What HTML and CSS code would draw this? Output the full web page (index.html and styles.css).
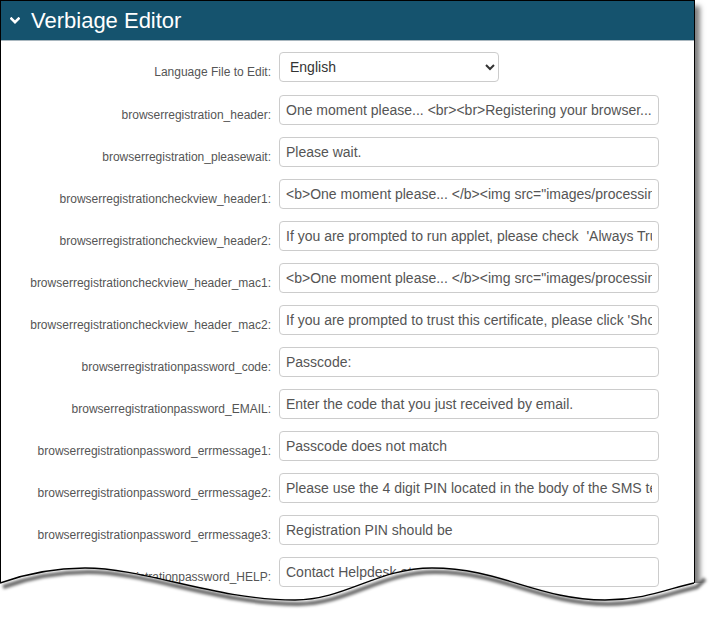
FILE: index.html
```html
<!DOCTYPE html>
<html lang="en">
<head>
<meta charset="utf-8">
<title>Verbiage Editor</title>
<link rel="stylesheet" href="styles.css">
</head>
<body>
<div class="page">
  <section class="panel">
    <header class="panel-head">
      <svg class="chev" width="10" height="8" viewBox="0 0 10 8"><polyline points="1.4,1.6 5,5.2 8.6,1.6" fill="none" stroke="#fff" stroke-width="2.6" stroke-linecap="square"/></svg>
      <h1 class="panel-title">Verbiage Editor</h1>
    </header>
    <form class="form">
      <label class="lbl">Language File to Edit:</label>
      <div class="ctl first"><select class="sel"><option>English</option></select></div>

      <label class="lbl">browserregistration_header:</label>
      <div class="ctl"><input class="inp" type="text" value="One moment please... &lt;br&gt;&lt;br&gt;Registering your browser..."></div>

      <label class="lbl">browserregistration_pleasewait:</label>
      <div class="ctl"><input class="inp" type="text" value="Please wait."></div>

      <label class="lbl">browserregistrationcheckview_header1:</label>
      <div class="ctl"><input class="inp" type="text" value="&lt;b&gt;One moment please... &lt;/b&gt;&lt;img src=&quot;images/processing.gif&quot;&gt;"></div>

      <label class="lbl">browserregistrationcheckview_header2:</label>
      <div class="ctl"><input class="inp" type="text" value="If you are prompted to run applet, please check  'Always Trust...'"></div>

      <label class="lbl">browserregistrationcheckview_header_mac1:</label>
      <div class="ctl"><input class="inp" type="text" value="&lt;b&gt;One moment please... &lt;/b&gt;&lt;img src=&quot;images/processing.gif&quot;&gt;"></div>

      <label class="lbl">browserregistrationcheckview_header_mac2:</label>
      <div class="ctl"><input class="inp" type="text" value="If you are prompted to trust this certificate, please click 'Show...'"></div>

      <label class="lbl">browserregistrationpassword_code:</label>
      <div class="ctl"><input class="inp" type="text" value="Passcode:"></div>

      <label class="lbl">browserregistrationpassword_EMAIL:</label>
      <div class="ctl"><input class="inp" type="text" value="Enter the code that you just received by email."></div>

      <label class="lbl">browserregistrationpassword_errmessage1:</label>
      <div class="ctl"><input class="inp" type="text" value="Passcode does not match"></div>

      <label class="lbl">browserregistrationpassword_errmessage2:</label>
      <div class="ctl"><input class="inp" type="text" value="Please use the 4 digit PIN located in the body of the SMS text message."></div>

      <label class="lbl">browserregistrationpassword_errmessage3:</label>
      <div class="ctl"><input class="inp" type="text" value="Registration PIN should be"></div>

      <label class="lbl">browserregistrationpassword_HELP:</label>
      <div class="ctl"><input class="inp" type="text" value="Contact Helpdesk at"></div>
    </form>
  </section>
  <svg class="tear" width="712" height="62" viewBox="0 0 712 62">
    <defs>
      <filter id="blur" x="-5%" y="-50%" width="110%" height="200%"><feGaussianBlur stdDeviation="1.8"/></filter>
    </defs>
    <path d="M-2,28 L0,28 C28,18 55,13 85,13 C145,13 215,45 295,45 C345,45 378,13 432,13 C500,13 538,45 605,45 C645,45 670,33 694,28 L712,28 L712,62 L-2,62 Z" fill="#fff"/>
    <path transform="translate(3,4)" d="M0,28 C28,18 55,13 85,13 C145,13 215,45 295,45 C345,45 378,13 432,13 C500,13 538,45 605,45 C645,45 670,33 694,28 L702,20" fill="none" stroke="rgba(0,0,0,0.6)" stroke-width="4" filter="url(#blur)"/>
    <path d="M0,28 C28,18 55,13 85,13 C145,13 215,45 295,45 C345,45 378,13 432,13 C500,13 538,45 605,45 C645,45 670,33 694,28" fill="none" stroke="#000" stroke-width="1.4"/>
  </svg>
</div>
</body>
</html>
```
FILE: styles.css
```css
html, body {
  margin: 0;
  padding: 0;
  background: #fff;
  overflow: hidden;
}
body {
  font-family: "Liberation Sans", Arial, sans-serif;
}
.page {
  position: relative;
  width: 710px;
  height: 617px;
}
.panel {
  width: 693px;
  height: 616px;
  border: 1px solid #000;
  border-bottom: none;
  background: #fff;
  box-shadow: 5px 6px 5px rgba(0, 0, 0, 0.5);
  overflow: hidden;
}
.panel-head {
  height: 39px;
  background: #15536e;
  border-bottom: 1px solid #a9b7bf;
  display: flex;
  align-items: center;
  padding-left: 9px;
  box-sizing: content-box;
}
.chev {
  display: block;
  margin-top: 1px;
}
.panel-title {
  margin: 0 0 0 11px;
  font-size: 22px;
  font-weight: normal;
  color: #fff;
  line-height: 25px;
}
.form {
  display: grid;
  grid-template-columns: 270px 380px;
  column-gap: 8px;
  row-gap: 12px;
  padding-top: 11px;
  margin: 0;
}
.lbl {
  text-align: right;
  font-size: 12px;
  line-height: 14px;
  color: #555;
  padding-top: 13px;
  white-space: nowrap;
}
.ctl.first {
  margin-bottom: 1px;
}
.inp, .sel {
  display: block;
  box-sizing: border-box;
  width: 380px;
  height: 30px;
  border: 1px solid #ccc;
  border-radius: 4px;
  background: #fff;
  font-family: "Liberation Sans", Arial, sans-serif;
  font-size: 14px;
  color: #555;
  padding: 0 6px;
  margin: 0;
  outline: none;
}
.sel {
  width: 220px;
  padding: 0 6px;
  color: #333;
}
.tear {
  position: absolute;
  left: 0;
  top: 555px;
}
```
